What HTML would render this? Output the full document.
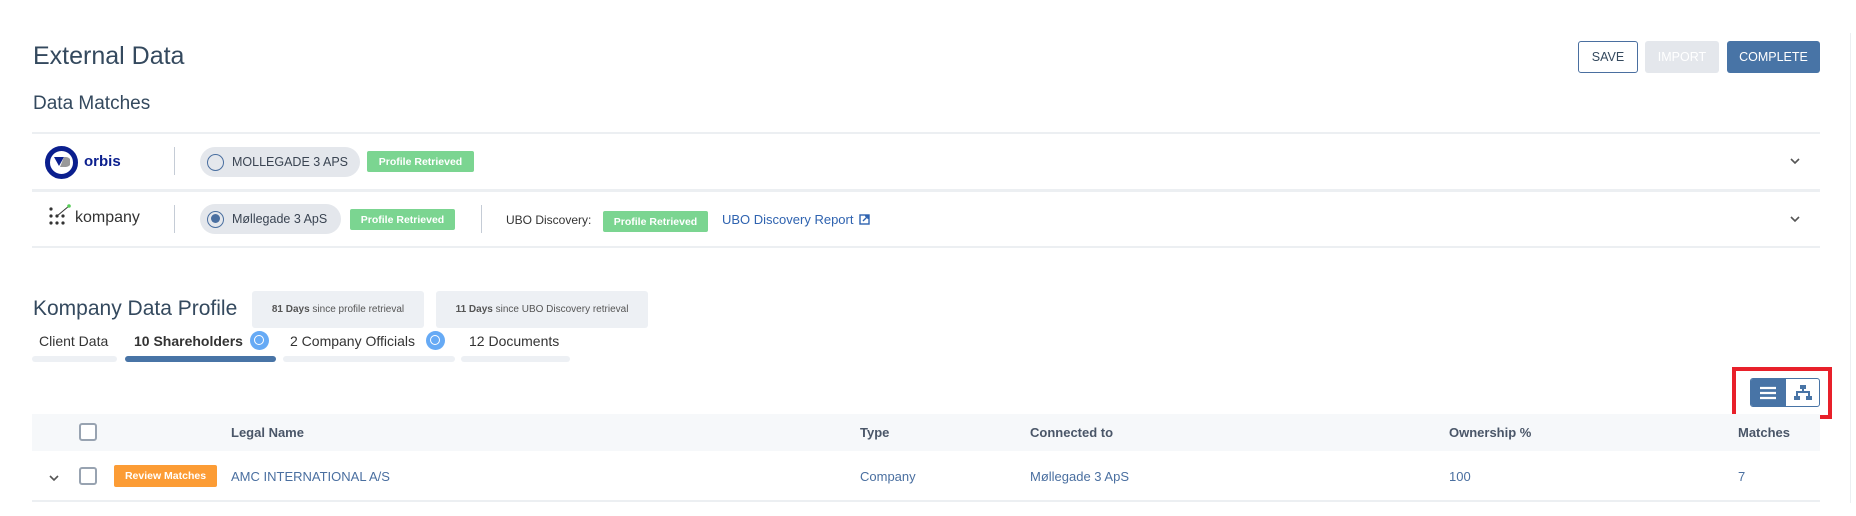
<!DOCTYPE html>
<html><head><meta charset="utf-8"><style>
*{box-sizing:border-box;margin:0;padding:0}
body{width:1856px;height:516px;background:#fff;font-family:"Liberation Sans",sans-serif;position:relative;overflow:hidden;color:#2c3e50}
.a{position:absolute;white-space:nowrap}
.hl{position:absolute;left:32px;width:1788px;height:2px;background:#eceff2}
.btn{position:absolute;top:41px;height:32px;border-radius:3px;font-size:12.5px;display:flex;align-items:center;justify-content:center}
.pill{position:absolute;height:30px;border-radius:15px;background:#e4e7ec;font-size:12.5px;color:#3a4452;display:flex;align-items:center}
.rad{width:17px;height:17px;border:1.5px solid #4a6fa0;border-radius:50%;margin:0 8px 0 7px;position:relative}
.badge{position:absolute;height:21px;background:#7bd591;color:#fff;font-size:10.5px;font-weight:bold;border-radius:2px;display:flex;align-items:center;justify-content:center}
.vs{position:absolute;width:1px;background:#c5ccd6}
.gb{position:absolute;top:291px;height:37px;background:#edf0f4;border-radius:3px;font-size:10px;color:#555;display:flex;align-items:center;justify-content:center}
.tab{position:absolute;top:333px;font-size:14px;color:#333}
.bar{position:absolute;top:356px;height:6px;background:#edf0f4;border-radius:3px}
.ic{position:absolute;width:19px;height:19px;border-radius:50%;background:#66aaf5}
.ic:after{content:"";position:absolute;left:4px;top:4px;width:8px;height:8px;border:1.5px solid #fff;border-radius:50%}
.cb{position:absolute;width:18px;height:18px;border:2px solid #98a3b1;border-radius:3px;background:#fff}
.th{position:absolute;top:425px;font-size:13px;color:#4a5668;font-weight:bold}
.td{position:absolute;top:469px;font-size:13px;color:#4a6fa0}
</style></head><body>
<div class="a" style="left:1850px;top:33px;width:1px;height:470px;background:#eceff2"></div>
<div class="a" style="left:33px;top:42px;font-size:25px;color:#34495e">External Data</div>
<div class="btn" style="left:1578px;width:60px;border:1px solid #4a6fa0;color:#34495e">SAVE</div>
<div class="btn" style="left:1645px;width:74px;background:#e4e7ec;color:#fff">IMPORT</div>
<div class="btn" style="left:1727px;width:93px;background:#4874a6;color:#fff">COMPLETE</div>
<div class="a" style="left:33px;top:93px;font-size:19px;color:#34495e">Data Matches</div>
<div class="hl" style="top:132px"></div>
<div class="hl" style="top:189px;height:3px"></div>
<div class="hl" style="top:246px"></div>
<!-- orbis -->
<div class="a" style="left:45px;top:146px;width:33px;height:33px;border:5px solid #0b1f8e;border-radius:50%"></div>
<svg class="a" style="left:52px;top:155px" width="18" height="14"><polygon points="2,2 12,2 7,11" fill="#0b1f8e"/><path d="M12,2 h2 a5,5 0 0 1 0,10 h-6z" fill="#999"/></svg>
<div class="a" style="left:84px;top:153px;font-size:15px;font-weight:bold;color:#0b1f8e">orbis</div>
<div class="vs" style="left:174px;top:147px;height:28px"></div>
<div class="pill" style="left:200px;top:147px;width:160px"><div class="rad"></div>MOLLEGADE 3 APS</div>
<div class="badge" style="left:367px;top:151px;width:107px">Profile Retrieved</div>
<svg class="a" style="left:1789px;top:157px" width="12" height="8"><path d="M2 2l4 4 4-4" stroke="#555" stroke-width="1.6" fill="none"/></svg>
<!-- kompany -->
<svg class="a" style="left:48px;top:204px" width="26" height="26"><g fill="#333"><circle cx="3" cy="5" r="1.6"/><circle cx="3" cy="12" r="1.6"/><circle cx="3" cy="19" r="1.6"/><circle cx="9" cy="12" r="1.6"/><circle cx="15" cy="12" r="1.6"/><circle cx="9" cy="19" r="1.6"/><circle cx="15" cy="19" r="1.6"/></g><path d="M9 12L21 2" stroke="#333" stroke-width="1"/><circle cx="21" cy="2" r="1.8" fill="#5c5"/></svg>
<div class="a" style="left:75px;top:209px;font-size:16px;color:#333">kompany</div>
<div class="vs" style="left:174px;top:205px;height:28px"></div>
<div class="pill" style="left:200px;top:204px;width:141px"><div class="rad"><div style="position:absolute;left:2.5px;top:2.5px;width:9px;height:9px;border-radius:50%;background:#4a6fa0"></div></div>Møllegade 3 ApS</div>
<div class="badge" style="left:350px;top:209px;width:105px">Profile Retrieved</div>
<div class="vs" style="left:481px;top:205px;height:28px"></div>
<div class="a" style="left:506px;top:213px;font-size:12px;color:#333">UBO Discovery:</div>
<div class="badge" style="left:603px;top:211px;width:105px">Profile Retrieved</div>
<div class="a" style="left:722px;top:212px;font-size:13px;color:#2f63b0">UBO Discovery Report</div>
<svg class="a" style="left:859px;top:214px" width="11" height="11"><rect x="1" y="1" width="9" height="9" fill="none" stroke="#2f63b0" stroke-width="1.4"/><path d="M4 7L9 2M6 2h3v3" stroke="#2f63b0" stroke-width="1.4" fill="none"/></svg>
<svg class="a" style="left:1789px;top:215px" width="12" height="8"><path d="M2 2l4 4 4-4" stroke="#555" stroke-width="1.6" fill="none"/></svg>
<!-- profile -->
<div class="a" style="left:33px;top:297px;font-size:21px;color:#34495e">Kompany Data Profile</div>
<div class="gb" style="left:252px;width:172px"><b>81 Days</b>&nbsp;since profile retrieval</div>
<div class="gb" style="left:436px;width:212px"><b>11 Days</b>&nbsp;since UBO Discovery retrieval</div>
<div class="tab" style="left:39px">Client Data</div>
<div class="tab" style="left:134px;font-weight:bold">10 Shareholders</div>
<div class="ic" style="left:250px;top:331px"></div>
<div class="tab" style="left:290px">2 Company Officials</div>
<div class="ic" style="left:426px;top:331px"></div>
<div class="tab" style="left:469px">12 Documents</div>
<div class="bar" style="left:32px;width:85px"></div>
<div class="bar" style="left:125px;width:151px;background:#4874a6"></div>
<div class="bar" style="left:283px;width:172px"></div>
<div class="bar" style="left:461px;width:109px"></div>
<!-- toggle -->
<div class="a" style="left:1732px;top:367px;width:100px;height:52px;border:4px solid #e8202a"></div>
<div class="a" style="left:1750px;top:378px;width:70px;height:29px;border:1px solid #4874a6;border-radius:3px;overflow:hidden">
<div style="position:absolute;left:0;top:0;width:35px;height:29px;background:#4874a6"></div>
<svg style="position:absolute;left:9px;top:7px" width="17" height="14"><path d="M0 2h16M0 7h16M0 12h16" stroke="#fff" stroke-width="2.2"/></svg>
<svg style="position:absolute;left:43px;top:6px" width="18" height="16"><g fill="#4874a6"><rect x="6" y="0" width="6" height="4"/><rect x="8" y="4" width="2" height="3"/><rect x="2" y="6" width="14" height="2"/><rect x="2" y="8" width="2" height="3"/><rect x="14" y="8" width="2" height="3"/><rect x="0" y="11" width="6" height="4"/><rect x="12" y="11" width="6" height="4"/></g></svg>
</div>
<!-- table -->
<div class="a" style="left:32px;top:414px;width:1788px;height:37px;background:#f6f8fa"></div>
<div class="cb" style="left:79px;top:423px"></div>
<div class="th" style="left:231px">Legal Name</div>
<div class="th" style="left:860px">Type</div>
<div class="th" style="left:1030px">Connected to</div>
<div class="th" style="left:1449px">Ownership %</div>
<div class="th" style="left:1738px">Matches</div>
<svg class="a" style="left:48px;top:474px" width="12" height="8"><path d="M2 2l4 4 4-4" stroke="#555" stroke-width="1.6" fill="none"/></svg>
<div class="cb" style="left:79px;top:467px"></div>
<div class="a" style="left:114px;top:465px;width:103px;height:22px;background:#fc9c35;border-radius:2px;color:#fff;font-size:10.5px;font-weight:bold;display:flex;align-items:center;justify-content:center">Review Matches</div>
<div class="td" style="left:231px">AMC INTERNATIONAL A/S</div>
<div class="td" style="left:860px">Company</div>
<div class="td" style="left:1030px">Møllegade 3 ApS</div>
<div class="td" style="left:1449px">100</div>
<div class="td" style="left:1738px">7</div>
<div class="hl" style="top:500px"></div>
</body></html>
